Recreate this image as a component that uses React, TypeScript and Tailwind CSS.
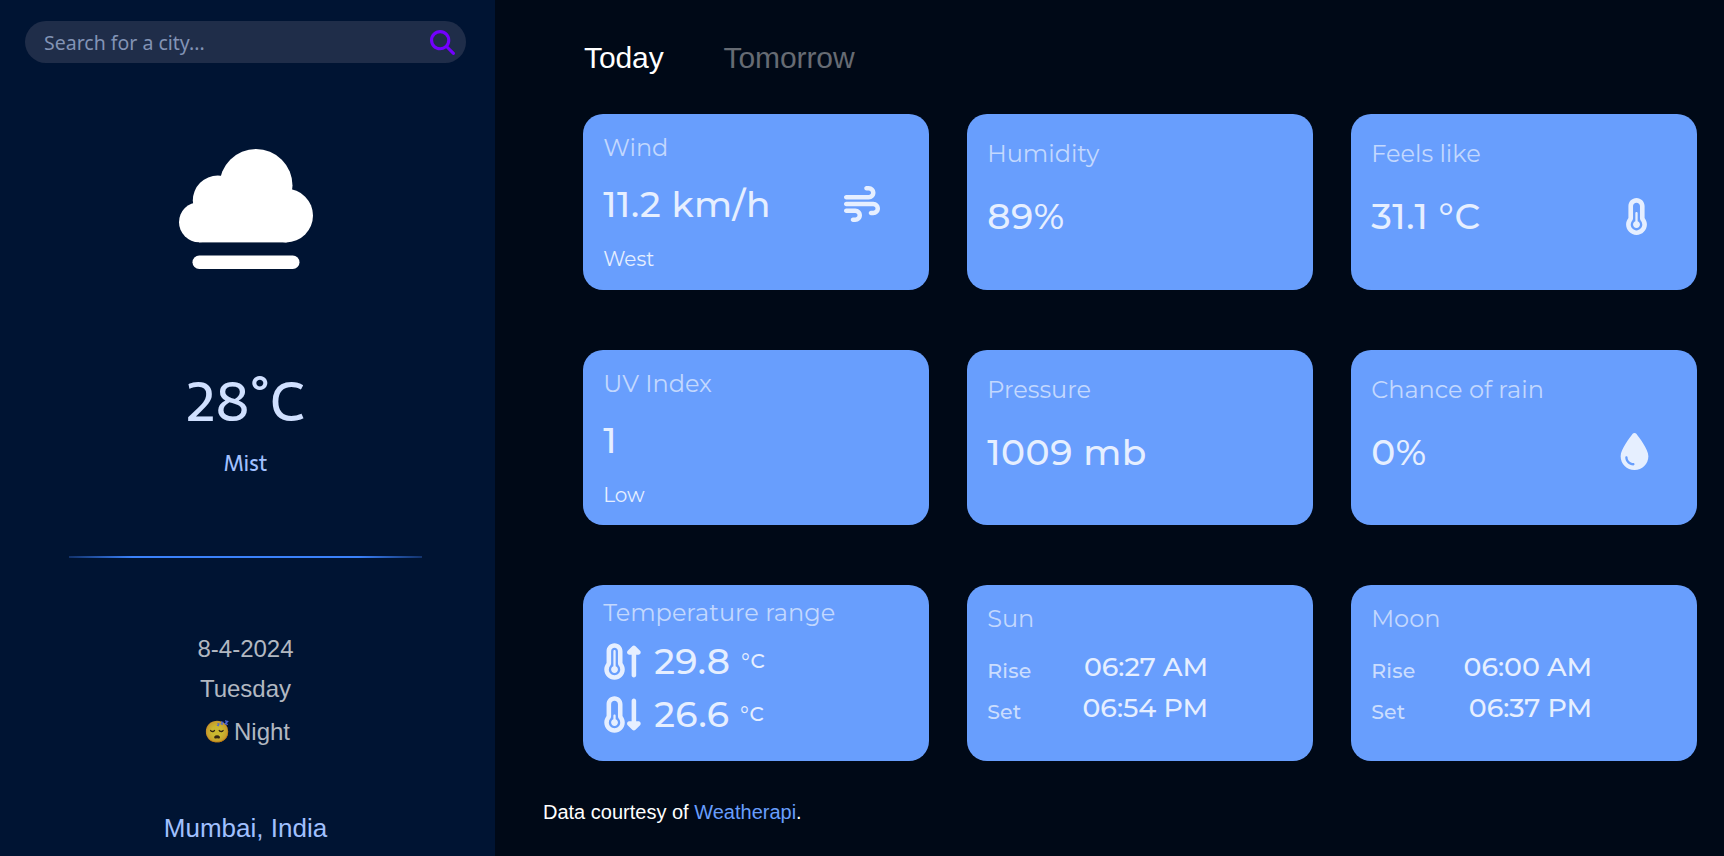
import type { ReactNode } from "react";
import {
  FaDroplet,
  FaMagnifyingGlass,
  FaTemperatureArrowDown,
  FaTemperatureArrowUp,
  FaTemperatureHalf,
  FaWind,
} from "react-icons/fa6";

function MistIcon() {
  return (
    <svg className="h-[120px] w-[134px]" viewBox="0 0 134 120" fill="white" aria-hidden="true">
      <circle cx="77" cy="36.5" r="36.5" />
      <circle cx="38.8" cy="51.5" r="25" />
      <circle cx="107.2" cy="66.6" r="26.8" />
      <circle cx="20" cy="73.2" r="20" />
      <rect x="20" y="52" width="87.5" height="41.4" />
      <rect x="13.5" y="106.5" width="107" height="13.5" rx="6.75" />
    </svg>
  );
}

function Card({ className, children }: { className: string; children: ReactNode }) {
  return (
    <section className={`flex flex-col rounded-[20px] bg-[#689efd] pl-[20.2px] pr-[49px] text-[#e6efff] ${className}`}>
      {children}
    </section>
  );
}

function Title({ children }: { children: ReactNode }) {
  return <h2 className="text-[24px] font-normal leading-[30px] text-[#c3d8fe]">{children}</h2>;
}

function Value({ children, icon }: { children: ReactNode; icon?: ReactNode }) {
  return (
    <div className="flex h-[44px] items-center justify-between text-[36px] font-medium leading-[44px] tracking-[0.55px]">
      <span>{children}</span>
      {icon}
    </div>
  );
}

function DetailCard({ title, value, note, icon }: { title: string; value: string; note: string; icon?: ReactNode }) {
  return (
    <Card className="gap-[19px] pt-[19px]">
      <Title>{title}</Title>
      <Value icon={icon}>{value}</Value>
      <p className="mt-[2px] text-[20px] leading-[24px]">{note}</p>
    </Card>
  );
}

function SimpleCard({ title, value, icon }: { title: string; value: string; icon?: ReactNode }) {
  return (
    <Card className="gap-[25px] pt-[25px]">
      <Title>{title}</Title>
      <Value icon={icon}>{value}</Value>
    </Card>
  );
}

function RangeRow({ icon, value }: { icon: ReactNode; value: string }) {
  return (
    <div className="flex h-[44px] items-center text-[36px] font-medium leading-[44px]">
      {icon}
      <span className="ml-[11px] tracking-[0.5px]">{value}</span>
      <span className="ml-[11px] text-[20px] leading-[44px] tracking-[0.5px]">°C</span>
    </div>
  );
}

function AstroRow({ label, time }: { label: string; time: string }) {
  return (
    <div className="flex w-[221px] justify-between font-medium">
      <span className="pt-[4px] text-[20.5px] leading-[32px] tracking-[0.2px] text-[#cbddfe]">{label}</span>
      <span className="text-[26.8px] leading-[32px]">{time}</span>
    </div>
  );
}

function AstroCard({ title, rise, set }: { title: string; rise: string; set: string }) {
  return (
    <Card className="pt-[19px]">
      <Title>{title}</Title>
      <div className="mt-[17px] flex flex-col gap-[5px]">
        <AstroRow label="Rise" time={rise} />
        <AstroRow label="Set" time={set} />
      </div>
    </Card>
  );
}

export default function App() {
  return (
    <div className="flex h-[856px] w-[1724px] overflow-hidden bg-[#000917] font-['Liberation_Sans',Arial,sans-serif]">
      <aside className="flex w-[495px] shrink-0 flex-col items-center bg-[#001433] pl-[25px] pr-[29px] pt-[21px]">
        <div className="flex h-[42px] w-full items-center justify-between rounded-full bg-[#1f2d49] pl-[19px] pr-[11px]">
          <input
            className="w-[300px] bg-transparent pt-px font-['Noto_Sans',sans-serif] text-[19.5px] text-white outline-none placeholder:text-[#8293b5]"
            placeholder="Search for a city..."
          />
          <FaMagnifyingGlass className="size-[25px] text-[#7300ff]" />
        </div>
        <div className="mt-[86px]">
          <MistIcon />
        </div>
        <p className="mt-[97px] font-['Sarala','Noto_Sans',sans-serif] text-[56px] leading-[70px] text-[#d0e0ff]">28˚C</p>
        <p className="mt-[12px] font-['Sarala','Noto_Sans',sans-serif] text-[22px] leading-[30px] text-[#a0c0ff]">Mist</p>
        <div className="mt-[78px] h-[2px] w-[353px] bg-[linear-gradient(90deg,#12326b,#3b82fb_18%,#3b82fb_82%,#12326b)]" />
        <div className="mt-[71px] flex flex-col items-center text-[24px] leading-[40px] text-[#b2b8c1]">
          <span>8-4-2024</span>
          <span>Tuesday</span>
          <span className="mt-[3px] flex items-center pl-[3px]">
            <span className="mr-[4px] text-[21px] opacity-80">😴</span>
            Night
          </span>
        </div>
        <p className="mt-[60px] text-[26px] leading-[32px] text-[#a0c0ff]">Mumbai, India</p>
      </aside>

      <main className="flex grow flex-col pl-[48px] pt-[38px]">
        <nav className="flex gap-[60px] pl-[41px] text-[30px] leading-[40px] tracking-[-0.1px]">
          <span className="text-white">Today</span>
          <span className="text-[#666b73]">Tomorrow</span>
        </nav>
        <div className="ml-[40px] mt-[36px] grid grid-cols-[repeat(3,346px)] grid-rows-[repeat(3,175.6px)] gap-x-[38px] gap-y-[60px] font-['Montserrat','Inter',sans-serif]">
          <DetailCard title="Wind" value="11.2 km/h" note="West" icon={<FaWind />} />
          <SimpleCard title="Humidity" value="89%" />
          <SimpleCard title="Feels like" value="31.1 °C" icon={<FaTemperatureHalf className="-mr-[7px] size-[37px]" />} />
          <DetailCard title="UV Index" value="1" note="Low" />
          <SimpleCard title="Pressure" value="1009 mb" />
          <SimpleCard title="Chance of rain" value="0%" icon={<FaDroplet className="-mr-[5px] size-[37px]" />} />
          <Card className="pt-[13px]">
            <Title>Temperature range</Title>
            <div className="mt-[11px] flex flex-col gap-[9px]">
              <RangeRow icon={<FaTemperatureArrowUp className="-ml-px size-[41px]" />} value="29.8" />
              <RangeRow icon={<FaTemperatureArrowDown className="-ml-px size-[41px]" />} value="26.6" />
            </div>
          </Card>
          <AstroCard title="Sun" rise="06:27 AM" set="06:54 PM" />
          <AstroCard title="Moon" rise="06:00 AM" set="06:37 PM" />
        </div>
        <p className="mt-[39px] text-[20px] leading-[24px] text-white">
          Data courtesy of <a className="text-[#689efd]">Weatherapi</a>.
        </p>
      </main>
    </div>
  );
}
